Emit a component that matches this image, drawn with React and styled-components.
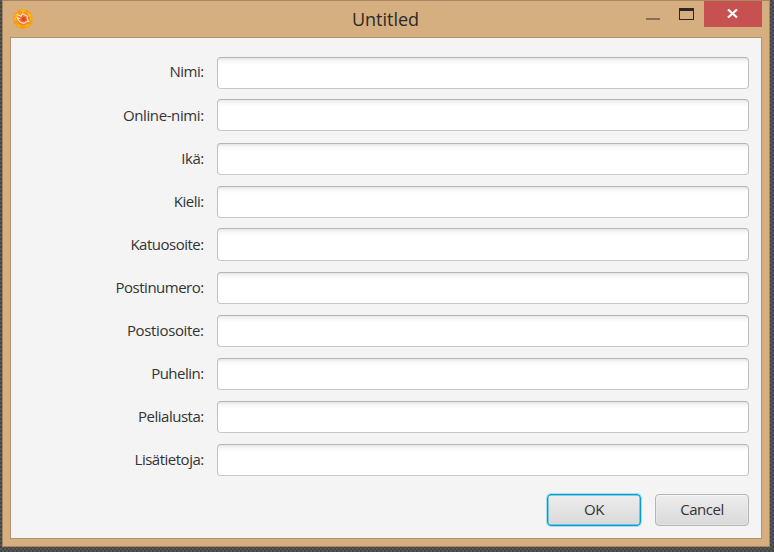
import React from "react";
import styled, { createGlobalStyle } from "styled-components";

const Global = createGlobalStyle`
  * { box-sizing: border-box; }
  html, body { margin: 0; height: 552px; overflow: hidden; }
  body { font-family: "Open Sans", "Noto Sans", sans-serif; color: #333; }
`;

const Desktop = styled.div`
  width: 774px;
  height: 552px;
  padding: 0 4px 5px 2px;
  background: repeating-conic-gradient(#444 0 25%, #575757 0 50%) 0 0 / 4px 4px;
`;

const Window = styled.div`
  width: 768px;
  height: 547px;
  border: 1px solid #a88661;
  background: #d5af80;
  padding: 0 7px 7px;
`;

const TitleBar = styled.header`
  display: grid;
  grid-template-columns: 150px 1fr 150px;
  height: 36px;
`;

const AppIcon = styled.svg`
  width: 20px;
  height: 20px;
  margin: 8px 0 0 3px;
`;

const Title = styled.h1`
  margin: 0;
  padding: 5px 1px 0 0;
  text-align: center;
  font-size: 18px;
  line-height: 26px;
  font-weight: 400;
  color: #2c2a28;
`;

const Controls = styled.div`
  display: flex;
  justify-content: flex-end;
  align-items: flex-start;
`;

const ControlButton = styled.button`
  display: block;
  flex: none;
  border: 0;
  padding: 0;
  margin-left: ${(p) => (p.$close ? 9 : 0)}px;
  width: ${(p) => p.$width}px;
  height: 26px;
  background: ${(p) => (p.$close ? "#c75050" : "transparent")};
  svg { display: block; }
`;

const Client = styled.main`
  width: 752px;
  height: 502px;
  border: 1px solid #b1926c;
  background: #f4f4f4;
  padding: 19px 12px 0 0;
`;

const Form = styled.div`
  display: grid;
  grid-template-rows: 42px 44px 43px 42px 44px 43px 43px 43px 43px 50px;
`;

const Row = styled.div`
  display: grid;
  grid-template-columns: 193px 532px;
  column-gap: 13px;
  align-items: start;
`;

const Label = styled.label`
  padding: ${(p) => p.$top}px 0.3px 0 0;
  text-align: right;
  white-space: nowrap;
  font-size: 15px;
  line-height: 20px;
  letter-spacing: ${(p) => p.$track}px;
`;

const Field = styled.input`
  width: 532px;
  height: ${(p) => p.$height}px;
  border: 1px solid;
  border-color: #b5b5b5 #c0c0c0 #c8c8c8;
  border-radius: 4px;
  outline: 0;
  background: linear-gradient(#e6e6e6, #f8f8f8 3px, #fff 7px);
`;

const Actions = styled.div`
  display: flex;
  justify-content: flex-end;
  gap: 14px;
`;

const Button = styled.button`
  width: 94px;
  height: 32px;
  margin: 0;
  padding: 0 0 3px;
  font: 15px/20px "Open Sans", "Noto Sans", sans-serif;
  letter-spacing: -0.5px;
  color: #333;
  border-radius: 4px;
  border: 1px solid ${(p) => (p.$primary ? "#039ed3" : "#b5b5b5")};
  background: linear-gradient(#ededed, #d9d9d9);
  box-shadow: ${(p) =>
    p.$primary
      ? "inset 0 0 0 0.5px #1ba9d8, 0 0 0 1px #a9dced"
      : "inset 0 0 0 1px #f0f0f066, inset 0 1px #f8f8f8"};
`;

const rows = [
  { label: "Nimi:", top: 4, height: 32, track: -0.5 },
  { label: "Online-nimi:", top: 6, height: 32, track: -0.4 },
  { label: "Ikä:", top: 5, height: 32, track: -0.5 },
  { label: "Kieli:", top: 5, height: 32, track: -0.5 },
  { label: "Katuosoite:", top: 6, height: 33, track: -0.5 },
  { label: "Postinumero:", top: 5, height: 32, track: -0.5 },
  { label: "Postiosoite:", top: 5, height: 32, track: -0.35 },
  { label: "Puhelin:", top: 5, height: 32, track: -0.5 },
  { label: "Pelialusta:", top: 5, height: 32, track: -0.5 },
  { label: "Lisätietoja:", top: 5, height: 32, track: -0.5 },
];

export default function App() {
  return (
    <>
      <Global />
      <Desktop>
        <Window>
          <TitleBar>
            <AppIcon viewBox="0 0 20 20">
              <circle cx="10" cy="10" r="9.8" fill="#f79a1c" />
              <path d="M7 .8h6L10 4ZM1 7l4-4 0 6ZM19 7l-4-4 0 6ZM2 15l5 1 1 3ZM18 15l-5 1-1 3ZM0 10l3-2v4ZM20 10l-3-2v4Z" fill="#fdb813" />
              <circle cx="10.5" cy="10" r="6" fill="#f27f26" />
              <circle cx="10.7" cy="10" r="4.3" fill="#f2723a" />
              <path d="M4.4 5.6 8 7.2 9.5 4.7 12 6 14.4 7.2 14.2 9.5 15.4 12.2 13 13 10.8 14.4 8 13.6 6.1 12 4.2 8.8 7 9.5" fill="none" stroke="#ffe9cf" strokeWidth="1.1" />
              <circle cx="10.7" cy="10.2" r="2.1" fill="#e94325" />
            </AppIcon>
            <Title>Untitled</Title>
            <Controls>
              <ControlButton $width={34} aria-label="Minimize">
                <svg width="34" height="26"><path d="M9 17h14v2H9z" fill="#87705a" /></svg>
              </ControlButton>
              <ControlButton $width={24} aria-label="Maximize">
                <svg width="24" height="26"><path fillRule="evenodd" d="M8 7h15v12H8zM9 10h13v8H9z" fill="#2b2725" /></svg>
              </ControlButton>
              <ControlButton $width={58} $close aria-label="Close">
                <svg width="58" height="26"><path d="m24 8.5 9 8m0-8-9 8" stroke="#fff" strokeWidth="2.3" /></svg>
              </ControlButton>
            </Controls>
          </TitleBar>
          <Client>
            <Form>
              {rows.map((r, i) => (
                <Row key={r.label}>
                  <Label htmlFor={`field-${i}`} $top={r.top} $track={r.track}>{r.label}</Label>
                  <Field id={`field-${i}`} $height={r.height} />
                </Row>
              ))}
            </Form>
            <Actions>
              <Button $primary>OK</Button>
              <Button>Cancel</Button>
            </Actions>
          </Client>
        </Window>
      </Desktop>
    </>
  );
}
